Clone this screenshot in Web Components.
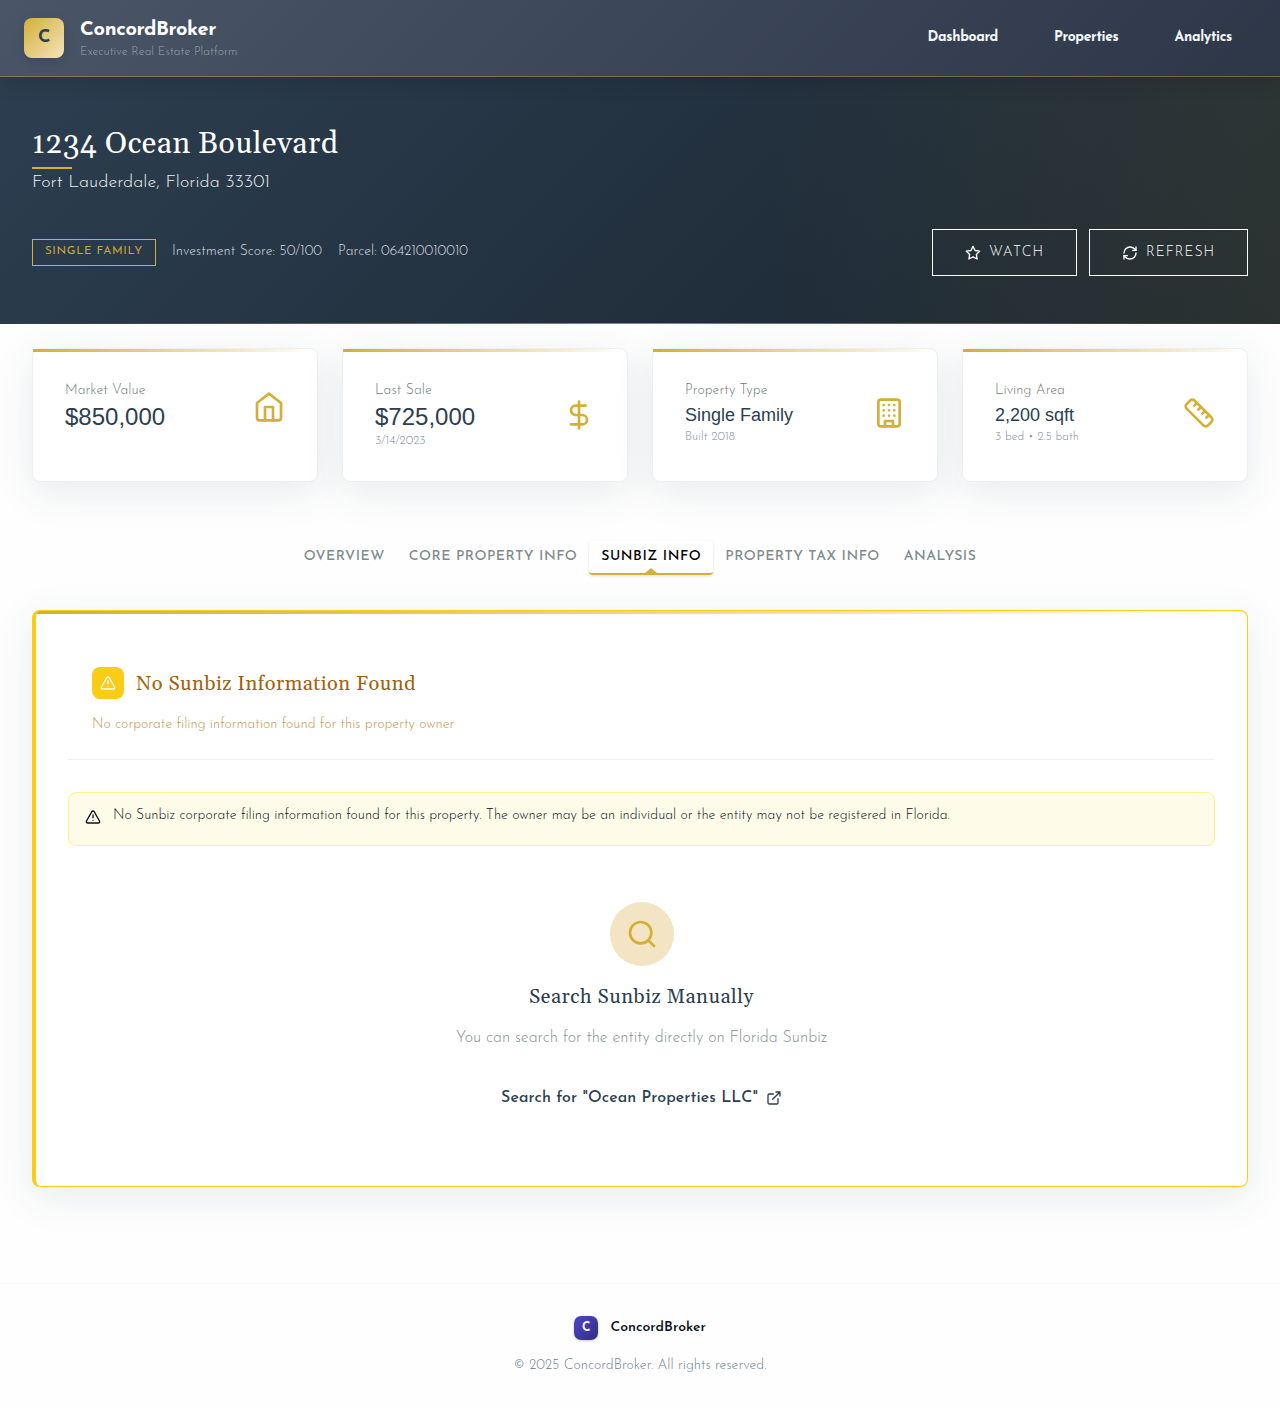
<!DOCTYPE html>
<html lang="en">
<head>
<meta charset="utf-8">
<title>ConcordBroker</title>
<style>
html,body{margin:0;background:#fefefe}
body{font-family:"Josefin Sans",Lato,"Liberation Sans",sans-serif;color:#0b0f1c}
</style>
</head>
<body>
<broker-app></broker-app>
<script>
const define=(name,html,after)=>{
  const t=document.createElement('template');t.innerHTML=html;
  customElements.define(name,class extends HTMLElement{
    connectedCallback(){
      if(this.shadowRoot)return;
      this.attachShadow({mode:'open'}).append(t.content.cloneNode(true));
      if(after)after(this,this.shadowRoot);
    }
  });
};

/* A line of text: w = measure, h = line box, s = font size, lift = rise above the line's centre */
define('fit-text',`<style>
:host{display:block;flex:none;box-sizing:border-box;white-space:nowrap;overflow:visible}
span{display:inline-block;vertical-align:top}
</style><span><slot></slot></span>`,(el,root)=>{
  const a=n=>el.getAttribute(n);
  const s=+a('s'),h=+a('h'),w=+a('w'),lift=+(a('lift')||0);
  el.style.fontSize=s+'px';el.style.height=h+'px';
  el.style.lineHeight=(h-2*lift*s)+'px';
  if(a('wt'))el.style.fontWeight=a('wt');
  if(w){
    el.style.width=w+'px';
    const span=root.querySelector('span');
    const n=el.textContent.length;
    const nat=span.getBoundingClientRect().width;
    span.style.letterSpacing=((w-nat)/n).toFixed(4)+'px';
  }
});

const icons={
home:'<path d="M3 9l9-7 9 7v11a2 2 0 0 1-2 2H5a2 2 0 0 1-2-2z"/><path d="M9 22V12h6v10"/>',
dollar:'<path d="M12 2v20"/><path d="M17 5H9.5a3.5 3.5 0 0 0 0 7h5a3.5 3.5 0 0 1 0 7H6"/>',
building:'<rect x="4" y="2" width="16" height="20" rx="2"/><path d="M9 22v-4h6v4M8 6h.01M16 6h.01M12 6h.01M12 10h.01M12 14h.01M16 10h.01M16 14h.01M8 10h.01M8 14h.01"/>',
ruler:'<path d="M21.3 15.3a2.4 2.4 0 0 1 0 3.4l-2.6 2.6a2.4 2.4 0 0 1-3.4 0L2.7 8.7a2.41 2.41 0 0 1 0-3.4l2.6-2.6a2.41 2.41 0 0 1 3.4 0Z"/><path d="m14.5 12.5 2-2M11.5 9.5l2-2M8.5 6.5l2-2M17.5 15.5l2-2"/>',
star:'<path d="M12 2l3.09 6.26L22 9.27l-5 4.87 1.18 6.88L12 17.77l-6.18 3.25L7 14.14 2 9.27l6.91-1.01z"/>',
refresh:'<path d="M3 12a9 9 0 0 1 9-9 9.75 9.75 0 0 1 6.74 2.74L21 8"/><path d="M21 3v5h-5M21 12a9 9 0 0 1-9 9 9.75 9.75 0 0 1-6.74-2.74L3 16"/><path d="M8 16H3v5"/>',
alert:'<path d="m21.73 18-8-14a2 2 0 0 0-3.48 0l-8 14A2 2 0 0 0 4 21h16a2 2 0 0 0 1.73-3Z"/><path d="M12 9v4M12 17h.01"/>',
search:'<circle cx="11" cy="11" r="8"/><path d="m21 21-4.3-4.3"/>',
external:'<path d="M15 3h6v6M10 14 21 3M18 13v6a2 2 0 0 1-2 2H5a2 2 0 0 1-2-2V8a2 2 0 0 1 2-2h6"/>'
};
define('line-icon','<style>:host{display:block;flex:none}svg{display:block}</style>',(el,root)=>{
  const z=el.getAttribute('size')||16;
  root.innerHTML+=`<svg width="${z}" height="${z}" viewBox="0 0 24 24" fill="none" stroke="currentColor" stroke-width="2" stroke-linecap="round" stroke-linejoin="round">${icons[el.getAttribute('name')]}</svg>`;
});

define('site-header',`<style>
:host{display:flex;box-sizing:border-box;height:77px;padding:0 48px 0 24px;align-items:center;justify-content:space-between;
background:linear-gradient(135deg,#4a5568,#2d3748);border-bottom:1px solid rgba(212,175,55,.4);box-shadow:0 4px 20px rgba(0,0,0,.15);position:relative;z-index:1;color:#fff}
.brand{display:flex;gap:16px;align-items:center}
.name{padding-top:2px}
.logo{width:40px;height:40px;border-radius:8px;background:linear-gradient(135deg,#d4af37,#f4e4bc);display:flex;justify-content:center;box-shadow:0 4px 12px rgba(0,0,0,.12);color:#2c3e50}
.sub{color:#9aa5a9}
nav{display:flex;gap:56px;color:#f4f6f7;padding-bottom:1px}
</style>
<div class="brand"><div class="logo"><fit-text s="18" h="40" w="12" wt="700">C</fit-text></div>
<div class="name"><fit-text s="20" h="25" w="136" wt="700">ConcordBroker</fit-text><fit-text class="sub" s="12" h="18" w="157.5" wt="300">Executive Real Estate Platform</fit-text></div></div>
<nav><fit-text s="14" h="22" w="70.5" wt="700">Dashboard</fit-text><fit-text s="14" h="22" w="64.5" wt="700">Properties</fit-text><fit-text s="14" h="22" w="57.5" wt="700">Analytics</fit-text></nav>`);

define('outline-button',`<style>
:host{display:flex;box-sizing:border-box;height:47px;padding:0 32px;border:1px solid #fff;align-items:center;gap:8px;color:#fff}
</style><slot></slot>`);

define('property-hero',`<style>
:host{display:flex;flex-direction:column;box-sizing:border-box;height:247px;padding:48px 32px;color:#fff;
background:linear-gradient(90deg,transparent,rgba(212,175,55,.7),transparent) bottom/100% 1px no-repeat,
linear-gradient(90deg,transparent,rgba(212,175,55,.09)) right/40% 100% no-repeat,
linear-gradient(135deg,#2c3e50,#1a252f)}
.t{font-family:Georgia,Gelasio,"Liberation Serif",serif}
.rule{width:40px;height:2px;background:#d4af37;margin-top:6px}
.city{color:#ecf0f1;margin-top:2px}
.row{display:flex;justify-content:space-between;align-items:center;margin-top:34px}
.meta{display:flex;gap:16px;align-items:center;color:#dadfe2}
.meta>fit-text{margin-bottom:2px}
.badge{border:1px solid #d4af37;color:#c9a43a;padding:0 12px;height:25px}
.acts{display:flex;gap:12px}
</style>
<fit-text class="t" s="30" h="36" w="306.5" lift="-.04">1234 Ocean Boulevard</fit-text>
<div class="rule"></div>
<fit-text class="city" s="18" h="24" w="238" wt="300">Fort Lauderdale, Florida 33301</fit-text>
<div class="row"><div class="meta">
<div class="badge"><fit-text s="11.5" h="23" w="98" wt="400">SINGLE FAMILY</fit-text></div>
<fit-text s="14" h="24" w="150" wt="300">Investment Score: 50/100</fit-text>
<fit-text s="14" h="24" w="130" wt="300">Parcel: 064210010010</fit-text></div>
<div class="acts"><outline-button><line-icon name="star"></line-icon><fit-text s="14" h="45" w="55" wt="300">WATCH</fit-text></outline-button>
<outline-button><line-icon name="refresh"></line-icon><fit-text s="14" h="45" w="69" wt="300">REFRESH</fit-text></outline-button></div></div>`);

define('stat-card',`<style>
:host{display:flex;flex:1;box-sizing:border-box;height:134px;border:1px solid #ecf0f1;border-radius:8px;padding:32px;justify-content:space-between;align-items:flex-start;
background:linear-gradient(90deg,#d4af37,transparent) top/100% 3px no-repeat,#fff;box-shadow:0 10px 40px rgba(44,62,80,.1);position:relative}
:host::before{content:"";position:absolute;left:0;top:0;width:8px;height:3px;background:#d4af37}
.row{display:flex;justify-content:space-between;align-items:center;width:100%}
::slotted(line-icon){color:#d4af37}
</style><div class="row"><div><slot></slot></div><slot name="icon"></slot></div>`);

define('stat-grid',`<style>
:host{display:flex;gap:24px;padding:24px 32px 0}
.l{color:#6c7879}.v{font-family:"Liberation Sans",sans-serif;color:#2c3e50}.d{color:#828c99}
</style>
<stat-card><fit-text class="l" s="14" h="20" w="80.5" wt="300">Market Value</fit-text><fit-text class="v" s="24" h="32">$850,000</fit-text><line-icon slot="icon" name="home" size="32"></line-icon></stat-card>
<stat-card><fit-text class="l" s="14" h="20" w="57" wt="300">Last Sale</fit-text><fit-text class="v" s="24" h="32">$725,000</fit-text><fit-text class="d" s="12" h="16" w="50.5" wt="300">3/14/2023</fit-text><line-icon slot="icon" name="dollar" size="32"></line-icon></stat-card>
<stat-card><fit-text class="l" s="14" h="20" w="82.5" wt="300">Property Type</fit-text><fit-text class="v" s="18" h="28">Single Family</fit-text><fit-text class="d" s="12" h="16" w="50" wt="300">Built 2018</fit-text><line-icon slot="icon" name="building" size="32"></line-icon></stat-card>
<stat-card><fit-text class="l" s="14" h="20" w="70" wt="300">Living Area</fit-text><fit-text class="v" s="18" h="28">2,200 sqft</fit-text><fit-text class="d" s="12" h="16" w="84" wt="300">3 bed • 2.5 bath</fit-text><line-icon slot="icon" name="ruler" size="32"></line-icon></stat-card>`);

define('tab-bar',`<style>
:host{display:flex;justify-content:center;margin-top:59px;color:#7f8c8d}
div{padding:0 12px;height:32px;border-bottom:2px solid transparent;border-radius:4px}
.on{color:#000;background:#fff;border-color:#d4af37;box-shadow:0 1px 3px rgba(0,0,0,.12);position:relative}
.on::after{content:"";position:absolute;left:50%;bottom:0;margin-left:-6px;border:6px solid transparent;border-top:0;border-bottom:5px solid #d4af37}
</style>
<div><fit-text s="14" h="32" w="81" wt="500">OVERVIEW</fit-text></div>
<div><fit-text s="14" h="32" w="168.5" wt="500">CORE PROPERTY INFO</fit-text></div>
<div class="on"><fit-text s="14" h="32" w="100" wt="500">SUNBIZ INFO</fit-text></div>
<div><fit-text s="14" h="32" w="154.5" wt="500">PROPERTY TAX INFO</fit-text></div>
<div><fit-text s="14" h="32" w="72.5" wt="500">ANALYSIS</fit-text></div>`);

define('sunbiz-panel',`<style>
:host{display:flex;flex-direction:column;box-sizing:border-box;height:577px;margin:35px 32px 0;border:1px solid #facc15;border-left-width:4px;border-radius:8px;padding:32px;
background:linear-gradient(90deg,#d4af37,#f4e4bc 70%,transparent) top/100% 3px no-repeat,#fff;box-shadow:0 10px 40px rgba(44,62,80,.1)}
header{padding:24px 24px 22px;border-bottom:1px solid #ecf0f1}
.head{display:flex;gap:12px;align-items:center}
.box{width:32px;height:32px;border-radius:8px;background:#facc15;color:#fff;display:grid;place-items:center}
.t{font-family:Georgia,Gelasio,"Liberation Serif",serif;color:#a16207}
.s{color:#c4954a;margin-top:14px}
.alert{display:flex;box-sizing:border-box;height:54px;gap:12px;margin-top:32px;padding:12px 16px;background:#fefce8;border:1px solid #fef08a;border-radius:8px;color:#0b0f1c}
.alert line-icon{margin-top:4px}
.body{display:flex;flex-direction:column;align-items:center;margin-top:56px;color:#2c3e50}
.round{width:64px;height:64px;border-radius:50%;background:#f3e5c3;color:#d4af37;display:grid;place-items:center}
.h{color:#2c3e50;margin-top:16px}
.p{color:#859192;margin-top:14px}
.link{display:flex;gap:8px;align-items:center;margin-top:37px}
</style>
<header><div class="head"><div class="box"><line-icon name="alert"></line-icon></div><fit-text class="t" s="20" h="32" w="280" lift="-.08">No Sunbiz Information Found</fit-text></div>
<fit-text class="s" s="14" h="24" w="362" wt="300">No corporate filing information found for this property owner</fit-text></header>
<div class="alert"><line-icon name="alert"></line-icon><fit-text s="14" h="21" w="836.5" wt="300">No Sunbiz corporate filing information found for this property. The owner may be an individual or the entity may not be registered in Florida.</fit-text></div>
<div class="body"><div class="round"><line-icon name="search" size="32"></line-icon></div>
<fit-text class="t h" s="20" h="28" w="225" lift="-.08">Search Sunbiz Manually</fit-text>
<fit-text class="p" s="16" h="28" w="371.5" wt="300">You can search for the entity directly on Florida Sunbiz</fit-text>
<div class="link"><fit-text s="16" h="18" w="257" wt="500">Search for "Ocean Properties LLC"</fit-text><line-icon name="external"></line-icon></div></div>`);

define('site-footer',`<style>
:host{display:flex;flex-direction:column;align-items:center;box-sizing:border-box;height:125px;margin-top:96px;border-top:1px solid #f5f6f7;padding-top:32px}
.b{display:flex;gap:12.5px}
.logo{width:24px;height:24px;border-radius:7px;background:linear-gradient(135deg,#4f46c8,#312e81);color:#fff;display:flex;justify-content:center;box-shadow:0 1px 3px rgba(0,0,0,.2)}
.c{color:#708090;margin-top:14px}
</style>
<div class="b"><div class="logo"><fit-text s="12" h="24" w="8" wt="700">C</fit-text></div><fit-text s="14" h="23" w="95.5" wt="600">ConcordBroker</fit-text></div>
<fit-text class="c" s="14" h="24" w="253" wt="300">© 2025 ConcordBroker. All rights reserved.</fit-text>`);

define('broker-app',`<style>:host{display:block}</style>
<site-header></site-header><property-hero></property-hero><stat-grid></stat-grid><tab-bar></tab-bar><sunbiz-panel></sunbiz-panel><site-footer></site-footer>`);
</script>
</body>
</html>
